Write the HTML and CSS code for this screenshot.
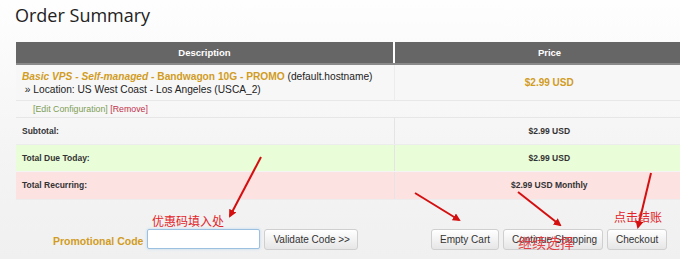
FILE: index.html
```html
<!DOCTYPE html>
<html lang="en">

<head>
    <meta charset="UTF-8">
    <meta name="viewport" content="width=device-width, initial-scale=1.0">
    <title>Order Summary</title>
    <link rel="stylesheet" href="styles.css">
</head>

<body>
    <div class="page">
        <h1>Order Summary</h1>

        <table class="cart">
            <tr class="head-row">
                <th class="desc">Description</th>
                <th class="price">Price</th>
            </tr>
            <tr class="item">
                <td class="desc">
                    <b class="orange"><i>Basic VPS - Self-managed</i> - Bandwagon 10G - PROMO</b> (default.hostname)<br>
                    &nbsp;&raquo; Location: US West Coast - Los Angeles (USCA_2)
                </td>
                <td class="price"><b class="orange">$2.99 USD</b></td>
            </tr>
            <tr class="links">
                <td colspan="2">
                    <span class="edit">[Edit Configuration]</span> <span class="remove">[Remove]</span>
                </td>
            </tr>
            <tr class="sum">
                <td class="desc">Subtotal:</td>
                <td class="price">$2.99 USD</td>
            </tr>
            <tr class="sum today">
                <td class="desc">Total Due Today:</td>
                <td class="price">$2.99 USD</td>
            </tr>
            <tr class="sum recurring">
                <td class="desc">Total Recurring:</td>
                <td class="price">$2.99 USD Monthly</td>
            </tr>
        </table>

        <div class="actions">
            <form class="promo">
                <label for="code">Promotional Code</label>
                <input id="code" type="text">
                <button type="button">Validate Code &gt;&gt;</button>
            </form>
            <div class="buttons">
                <button type="button" class="empty">Empty Cart</button>
                <button type="button" class="continue">Continue Shopping</button>
                <button type="button" class="checkout">Checkout</button>
            </div>
        </div>

        <!-- red notes drawn over the screenshot -->
        <svg class="arrows" width="680" height="259">
            <defs>
                <marker id="tip" markerWidth="8" markerHeight="8" refX="6" refY="4" orient="auto" markerUnits="userSpaceOnUse">
                    <path d="M0,0 L8,4 L0,8 Z" fill="#d40f0f"></path>
                </marker>
            </defs>
            <line x1="261" y1="157" x2="230" y2="216" marker-end="url(#tip)"></line>
            <line x1="415" y1="193" x2="459" y2="220" marker-end="url(#tip)"></line>
            <line x1="518" y1="192" x2="560" y2="225" marker-end="url(#tip)"></line>
            <line x1="651" y1="173" x2="638" y2="227" marker-end="url(#tip)"></line>
        </svg>
        <span class="note note-promo">优惠码填入处</span>
        <span class="note note-checkout">点击结账</span>
        <span class="note note-continue">继续选择</span>
    </div>
</body>

</html>
```

FILE: styles.css
```css
* {
    margin: 0;
    padding: 0;
    box-sizing: border-box;
}

body {
    font-family: "Liberation Sans", Arial, sans-serif;
    background: linear-gradient(to bottom, #fefefe 0%, #f4f4f4 60%, #f0f0f0 100%);
    overflow: hidden;
    color: #222;
}

.page {
    position: relative;
    width: 680px;
    height: 259px;
    overflow: hidden;
}

h1 {
    font-family: "Open Sans", sans-serif;
    font-weight: normal;
    font-size: 18px;
    color: #222;
    padding: 3px 0 0 15px;
    height: 42px;
}

.cart {
    margin-left: 16px;
    width: 688px;
    border-collapse: collapse;
    font-size: 10.2px;
}

.cart .desc {
    width: 378px;
}

.head-row th {
    background-color: #666;
    color: white;
    font-size: 9.5px;
    height: 22px;
    border-bottom: 2px solid #8a8a8a;
}

.head-row th.price {
    border-left: 2px solid white;
}

.orange {
    color: #d19c1f;
}

.item td {
    background-color: #f7f7f7;
    height: 36px;
    padding: 1px 6px 0;
    line-height: 13px;
    border-bottom: 1px solid #e8e8e8;
    white-space: nowrap;
}

.item td.price {
    text-align: center;
    font-size: 10px;
    border-left: 1px solid #ececec;
}

.links td {
    height: 17px;
    padding-left: 17px;
    font-size: 8.8px;
    border-bottom: 1px solid #e6e6e6;
}

.edit {
    color: #7d9d55;
}

.remove {
    color: #c3304a;
}

.sum td {
    height: 27px;
    font-size: 8.5px;
    font-weight: bold;
    color: #333;
    border-bottom: 1px solid #ececec;
}

.sum td.desc {
    padding-left: 6px;
}

.sum td.price {
    text-align: center;
    border-left: 1px solid #e4e4e4;
}

.today td {
    background-color: #e9fdd9;
    border-bottom: 1px solid #f4f4f4;
}

.recurring td {
    background-color: #fde2e2;
    height: 28px;
}

.actions {
    display: flex;
    justify-content: space-between;
    align-items: center;
    margin-top: 29px;
    padding: 0 13px 0 53px;
}

.promo {
    display: flex;
    align-items: center;
    gap: 4px;
}

.promo label {
    color: #d19c1f;
    font-weight: bold;
    font-size: 10.5px;
    margin-top: 4px;
}

.promo input {
    width: 113px;
    height: 20px;
    border: 1px solid #9cc0e0;
    border-radius: 2px;
    box-shadow: 0 0 3px #bcd8f0;
    background: white;
}

.buttons {
    display: flex;
    gap: 4px;
}

button {
    height: 21px;
    padding: 0 8px;
    font-family: "Liberation Sans", Arial, sans-serif;
    font-size: 10px;
    color: #333;
    background: linear-gradient(to bottom, #ffffff, #e6e6e6);
    border: 1px solid #cfcfcf;
    border-radius: 3px;
    cursor: pointer;
    white-space: nowrap;
}

.promo button {
    width: 94px;
}

.buttons .empty {
    width: 68px;
}

.buttons .continue {
    width: 100px;
}

.buttons .checkout {
    width: 60px;
}

.arrows {
    position: absolute;
    left: 0;
    top: 0;
}

.arrows line {
    stroke: #d40f0f;
    stroke-width: 2;
}

.note {
    position: absolute;
    color: #e0242a;
    font-family: "Noto Sans CJK SC", sans-serif;
    font-size: 12px;
    line-height: 1;
}

.note-promo {
    left: 152px;
    top: 215px;
}

.note-checkout {
    left: 614px;
    top: 211px;
}

.note-continue {
    left: 518px;
    top: 235px;
    font-size: 14px;
    color: rgba(224, 36, 42, 0.85);
}
```
